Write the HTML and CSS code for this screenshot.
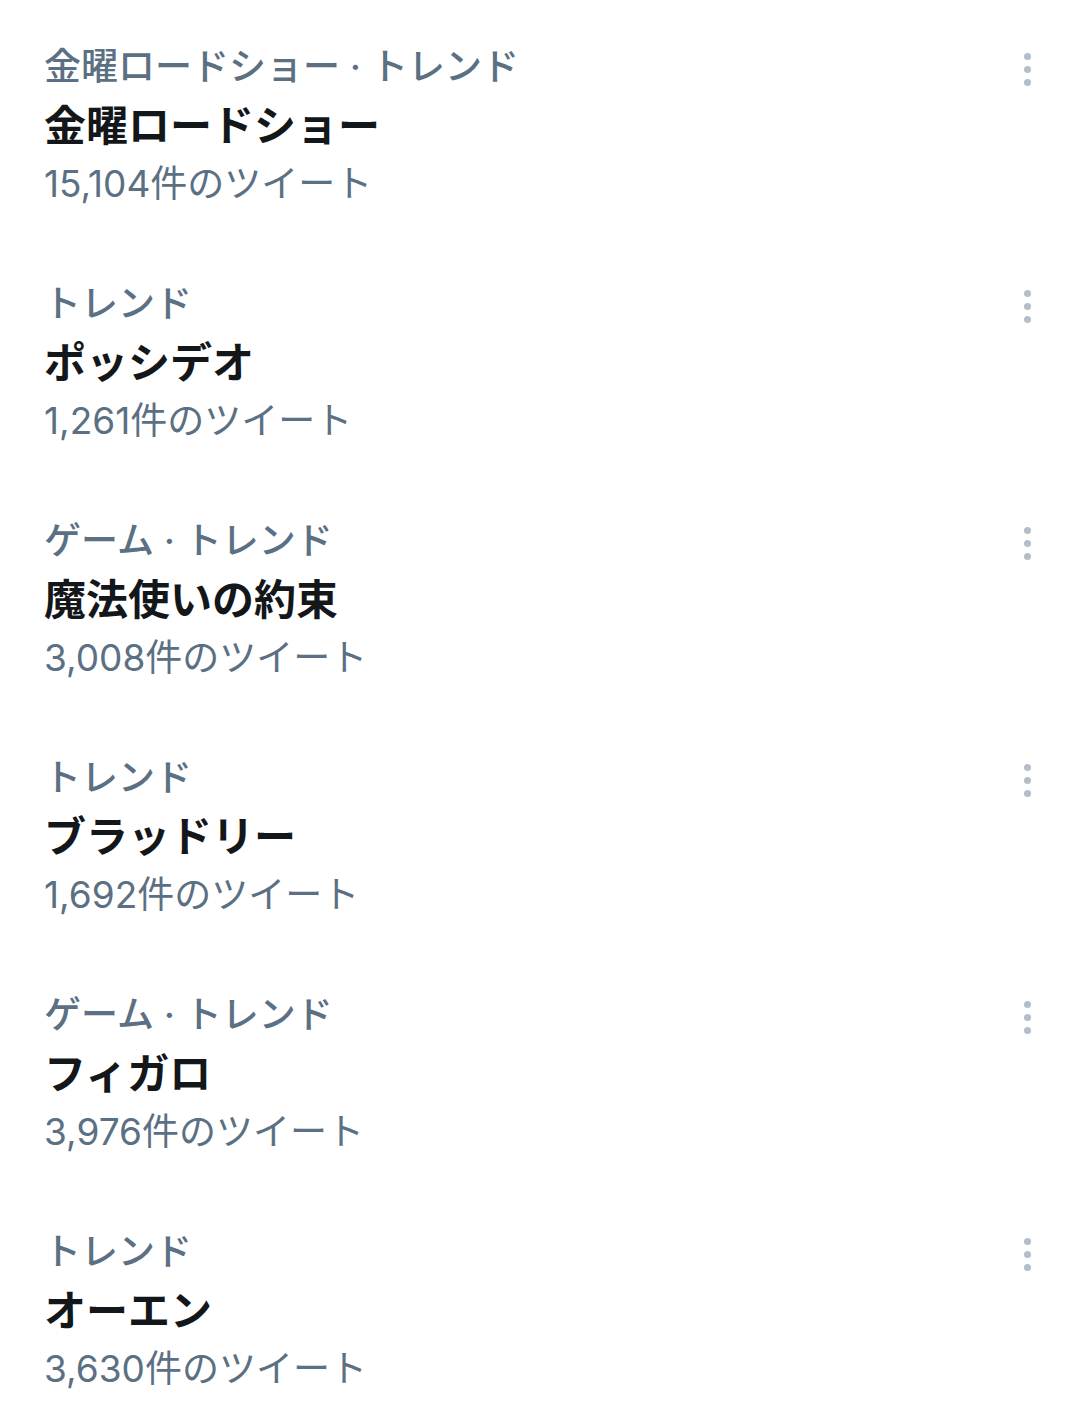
FILE: index.html
```html
<!DOCTYPE html>
<html lang="ja">
<head>
    <meta charset="UTF-8">
    <meta name="viewport" content="width=device-width, initial-scale=1.0">
    <title>トレンド</title>
    <link rel="stylesheet" href="styles.css">
</head>
<body>
    <div class="trend-list">
        <div class="trend">
            <div class="trend-body">
                <div class="trend-meta">金曜ロードショー · トレンド</div>
                <div class="trend-name">金曜ロードショー</div>
                <div class="trend-count">15,104件のツイート</div>
            </div>
            <div class="more"><span></span><span></span><span></span></div>
        </div>
        <div class="trend">
            <div class="trend-body">
                <div class="trend-meta">トレンド</div>
                <div class="trend-name">ポッシデオ</div>
                <div class="trend-count">1,261件のツイート</div>
            </div>
            <div class="more"><span></span><span></span><span></span></div>
        </div>
        <div class="trend">
            <div class="trend-body">
                <div class="trend-meta">ゲーム · トレンド</div>
                <div class="trend-name">魔法使いの約束</div>
                <div class="trend-count">3,008件のツイート</div>
            </div>
            <div class="more"><span></span><span></span><span></span></div>
        </div>
        <div class="trend">
            <div class="trend-body">
                <div class="trend-meta">トレンド</div>
                <div class="trend-name">ブラッドリー</div>
                <div class="trend-count">1,692件のツイート</div>
            </div>
            <div class="more"><span></span><span></span><span></span></div>
        </div>
        <div class="trend">
            <div class="trend-body">
                <div class="trend-meta">ゲーム · トレンド</div>
                <div class="trend-name">フィガロ</div>
                <div class="trend-count">3,976件のツイート</div>
            </div>
            <div class="more"><span></span><span></span><span></span></div>
        </div>
        <div class="trend">
            <div class="trend-body">
                <div class="trend-meta">トレンド</div>
                <div class="trend-name">オーエン</div>
                <div class="trend-count">3,630件のツイート</div>
            </div>
            <div class="more"><span></span><span></span><span></span></div>
        </div>
    </div>
</body>
</html>
```

FILE: styles.css
```css
:root { --text-main: #14171a; --text-sub: #5b7083; --dot: #b3bec8; }
body, html { margin: 0; background: #fff; font-family: Inter, "Noto Sans CJK JP", sans-serif; }
.trend-list { padding: 7px 44px 0 44px; }
.trend { display: flex; justify-content: space-between; align-items: flex-start; padding: 30px 0 31px; }
.trend-meta { font-size: 37px; line-height: 60px; font-weight: 500; color: var(--text-sub); }
.trend-name { font-size: 42px; line-height: 58px; font-weight: bold; color: var(--text-main); }
.trend-count { font-size: 37px; line-height: 58px; color: var(--text-sub); }
.more { display: flex; flex-direction: column; gap: 6px; padding: 16px 0 0 0; }
.more span { width: 7px; height: 7px; border-radius: 50%; background: var(--dot); }
```
